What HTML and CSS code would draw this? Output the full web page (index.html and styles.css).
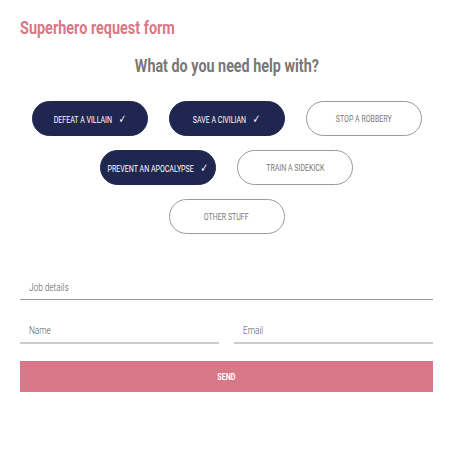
FILE: index.html
```html
<!DOCTYPE html>
<html>
<head>
<meta charset="utf-8">
<link rel="stylesheet" href="styles.css">
</head>
<body>
<div class="page">
  <h1 class="title"><span class="sq">Superhero request form</span></h1>
  <h2 class="question"><span class="sq">What do you need help with?</span></h2>
  <div class="choices">
    <div class="row">
      <button class="chip on"><span class="sq">DEFEAT A VILLAIN<i class="tick">✓</i></span></button>
      <button class="chip on"><span class="sq">SAVE A CIVILIAN<i class="tick">✓</i></span></button>
      <button class="chip"><span class="sq">STOP A ROBBERY</span></button>
    </div>
    <div class="row">
      <button class="chip on"><span class="sq">PREVENT AN APOCALYPSE<i class="tick">✓</i></span></button>
      <button class="chip"><span class="sq">TRAIN A SIDEKICK</span></button>
    </div>
    <div class="row">
      <button class="chip"><span class="sq">OTHER STUFF</span></button>
    </div>
  </div>
  <form class="form">
    <label class="field full"><span class="sq">Job details</span></label>
    <div class="pair">
      <label class="field half"><span class="sq">Name</span></label>
      <label class="field half"><span class="sq">Email</span></label>
    </div>
    <button type="button" class="send"><span class="sq">SEND</span></button>
  </form>
</div>
</body>
</html>
```
FILE: styles.css
```css
* { box-sizing: border-box; }
body {
  margin: 0;
  background: #fff;
  font-family: Roboto, "Liberation Sans", sans-serif;
}
.sq {
  display: inline-block;
  white-space: nowrap;
  transform: scaleX(0.8);
}
.page {
  padding: 17px 19px 0 20px;
}
.title {
  margin: 0;
  font-size: 19px;
  line-height: 22px;
  font-weight: bold;
  color: #d87787;
}
.title .sq { transform-origin: left center; transform: scaleX(0.76); }
.question {
  margin: 15px 0 0;
  text-align: center;
  font-size: 19px;
  line-height: 24px;
  font-weight: bold;
  color: #777;
}
.question .sq { transform: scaleX(0.755); }
.choices {
  margin-top: 23px;
  display: flex;
  flex-direction: column;
  gap: 14px;
}
.row {
  display: flex;
  justify-content: center;
  gap: 21px;
}
.chip {
  width: 116px;
  height: 35px;
  border-radius: 18px;
  border: 1px solid #9a9a9a;
  background: #fff;
  color: #777;
  font-family: inherit;
  font-size: 9.5px;
  padding: 0;
  display: flex;
  align-items: center;
  justify-content: center;
}
.chip .sq { transform: scaleX(0.74); }
.tick {
  font-style: normal;
  font-weight: bold;
  font-family: "DejaVu Sans", sans-serif;
  font-size: 12px;
  margin-left: 9px;
}
.chip.on {
  background: #1f2750;
  border-color: #1f2750;
  color: #fff;
}
.form {
  margin-top: 47px;
}
.field {
  display: block;
  padding: 0 0 4px 9px;
  font-size: 11px;
  line-height: 14px;
  font-weight: 300;
  color: #555;
}
.field .sq { transform-origin: left center; transform: scaleX(0.75); }
.full {
  border-bottom: 1px solid #999;
}
.pair {
  margin-top: 24px;
  display: flex;
  gap: 15px;
}
.half {
  flex: 1;
  border-bottom: 2px solid #ccc;
}
.send {
  margin-top: 17px;
  display: block;
  width: 100%;
  height: 31px;
  border: none;
  background: #d87787;
  color: #fff;
  font-family: inherit;
  font-weight: bold;
  font-size: 9px;
  padding: 0;
}
```
